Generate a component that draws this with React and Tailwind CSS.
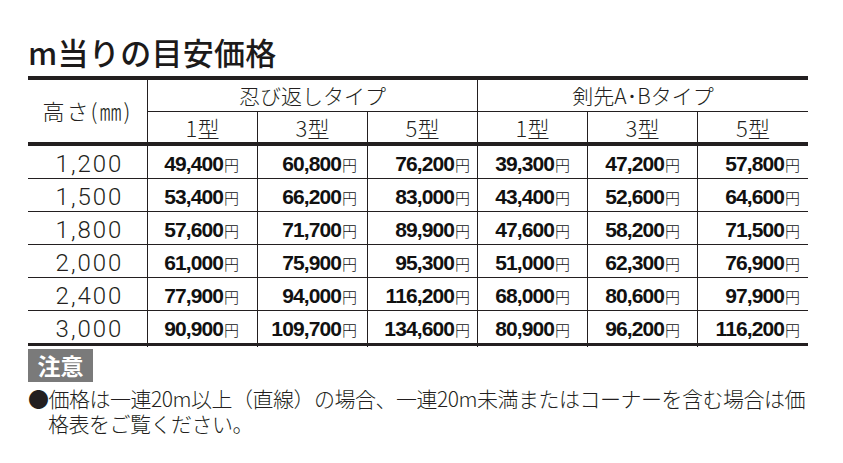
const jp = { fontFamily: '"Noto Sans CJK JP", "Noto Sans", sans-serif' };

const heights = ['1,200', '1,500', '1,800', '2,000', '2,400', '3,000'];

const prices = [
  ['49,400', '60,800', '76,200', '39,300', '47,200', '57,800'],
  ['53,400', '66,200', '83,000', '43,400', '52,600', '64,600'],
  ['57,600', '71,700', '89,900', '47,600', '58,200', '71,500'],
  ['61,000', '75,900', '95,300', '51,000', '62,300', '76,900'],
  ['77,900', '94,000', '116,200', '68,000', '80,600', '97,900'],
  ['90,900', '109,700', '134,600', '80,900', '96,200', '116,200'],
];

// right padding per price column, read off the picture
const padR = ['pr-[18px]', 'pr-[10px]', 'pr-[7px]', 'pr-[17px]', 'pr-[17px]', 'pr-[8px]'];

const cols = 'grid grid-cols-[119px_110px_110px_110px_110px_110px_111px]';

const PriceRow = ({ height, row, last }) => (
  <div className={`${cols} ${last ? 'h-[32px]' : 'h-[33px] border-b border-[#231f20]'}`}>
    <div className="flex items-center justify-center pl-[4px] font-['Roboto',sans-serif] text-[24px] font-light tracking-[2px] text-[#231f20]">
      {height}
    </div>
    {row.map((p, i) => (
      <div
        key={i}
        className={`flex items-center justify-end border-l border-[#231f20] ${padR[i]} text-[#111]`}
      >
        <span className="font-['Liberation_Sans',sans-serif] text-[21px] font-bold tracking-[-0.9px]">{p}</span>
        <span className="ml-[1px] mt-[3px] text-[15px] font-light" style={jp}>円</span>
      </div>
    ))}
  </div>
);

export default function App() {
  return (
    <div className="w-[843px] h-[463px] bg-white pl-[28px] pt-[33px] text-[#231f20]" style={jp}>
      {/* Title */}
      <h1 className="h-[43px] text-[31px] font-medium leading-[38px] tracking-[0.3px] text-[#1c1a1a]">
        m当りの目安価格
      </h1>

      <div className="w-[780px]">
        <div className="h-[4px] bg-[#231f20]" />

        {/* Header */}
        <div className={`${cols} grid-rows-[32px_30px] font-light`}>
          <div className="row-span-2 flex items-center justify-center pb-[2px] text-[22px] tracking-[2px]">
            高さ(㎜)
          </div>
          <div className="col-span-3 flex items-center justify-center border-l border-b border-[#231f20] text-[21px]">
            忍び返しタイプ
          </div>
          <div className="col-span-3 flex items-center justify-center border-l border-b border-[#231f20] text-[21px]">
            剣先A･Bタイプ
          </div>
          {['1型', '3型', '5型', '1型', '3型', '5型'].map((t, i) => (
            <div key={i} className="flex items-center justify-center border-l border-[#231f20] text-[22px]">
              {t}
            </div>
          ))}
        </div>

        <div className="h-[4px] bg-[#231f20]" />

        {/* Body */}
        {prices.map((row, i) => (
          <PriceRow key={i} height={heights[i]} row={row} last={i === prices.length - 1} />
        ))}

        <div className="h-[3px] bg-[#231f20]" />

        {/* Note */}
        <div className="mt-[3px] flex h-[33px] w-[65px] items-center justify-center bg-[#7a7a7a] text-[23px] font-bold text-white">
          注意
        </div>
        <p className="mt-[4px] pl-[20px] -indent-[20px] text-[21px] font-light leading-[25px] tracking-[-0.5px] text-[#231f20]">
          <span className="whitespace-nowrap">●価格は一連20m以上（直線）の場合、一連20m未満またはコーナーを含む場合は価</span>
          <br />
          格表をご覧ください。
        </p>
      </div>
    </div>
  );
}
